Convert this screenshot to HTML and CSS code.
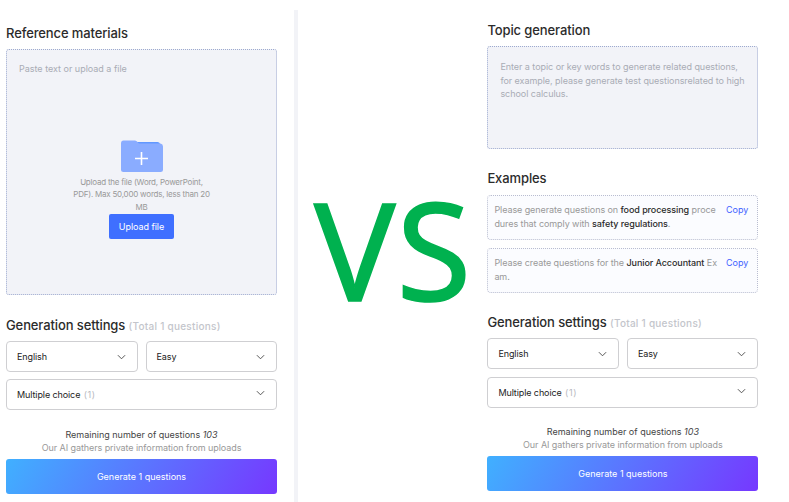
FILE: index.html
```html
<!DOCTYPE html>
<html lang="en">
<head>
  <meta charset="UTF-8">
  <meta name="viewport" content="width=device-width, initial-scale=1.0">
  <title>Question Generator</title>
  <link rel="stylesheet" href="styles.css">
</head>
<body>
  <div class="compare">
    <section class="panel panel-left">
      <h2>Reference materials</h2>
      <div class="upload-box">
        <p class="placeholder">Paste text or upload a file</p>
        <div class="upload">
          <svg class="folder" width="44" height="34" viewBox="0 0 44 34">
            <path d="M17 2h20.500q2 0 2.500 2v5H17z" fill="#6298ff"/>
            <path d="M1 3.500Q1 .5 3.500 .5H15q1.500 0 2.500 1.500T20 3.500h20.500Q43 4 43 6.500V29.500Q43 32 40.500 32H3.500Q1 32 1 29.500z" fill="#8aacff"/>
            <path d="M21.500 12v13M15 18.500h13" stroke="#fff" stroke-width="1.600" fill="none"/>
          </svg>
          <p class="upload-hint">Upload the file (Word, PowerPoint,<br>PDF). Max 50,000 words, less than 20<br>MB</p>
          <button class="upload-btn">Upload file</button>
        </div>
      </div>
      <h2 class="settings-title">Generation settings <small>(Total 1 questions)</small></h2>
      <div class="selects">
        <div class="select"><span>English</span><svg class="arrow" viewBox="0 0 10 6"><path d="M1 1l4 4 4-4"/></svg></div>
        <div class="select"><span>Easy</span><svg class="arrow" viewBox="0 0 10 6"><path d="M1 1l4 4 4-4"/></svg></div>
      </div>
      <div class="select select-wide"><span>Multiple choice <i class="count">(1)</i></span><svg class="arrow" viewBox="0 0 10 6"><path d="M1 1l4 4 4-4"/></svg></div>
      <div class="notes">
        <p class="remaining">Remaining number of questions <em>103</em></p>
        <p class="privacy">Our AI gathers private information from uploads</p>
      </div>
      <button class="generate">Generate 1 questions</button>
    </section>

    <div class="divider"></div>
    <div class="versus">VS</div>

    <section class="panel panel-right">
      <h2>Topic generation</h2>
      <div class="topic-box">
        <p class="placeholder">Enter a topic or key words to generate related questions,<br>for example, please generate test questionsrelated to high<br>school calculus.</p>
      </div>
      <h2 class="examples-title">Examples</h2>
      <div class="example">
        <p>Please generate questions on <b>food processing</b> proce<br>dures that comply with <b>safety regulations</b>.</p>
        <a class="copy">Copy</a>
      </div>
      <div class="example">
        <p>Please create questions for the <b>Junior Accountant</b> Ex<br>am.</p>
        <a class="copy">Copy</a>
      </div>
      <h2 class="settings-title">Generation settings <small>(Total 1 questions)</small></h2>
      <div class="selects">
        <div class="select"><span>English</span><svg class="arrow" viewBox="0 0 10 6"><path d="M1 1l4 4 4-4"/></svg></div>
        <div class="select"><span>Easy</span><svg class="arrow" viewBox="0 0 10 6"><path d="M1 1l4 4 4-4"/></svg></div>
      </div>
      <div class="select select-wide"><span>Multiple choice <i class="count">(1)</i></span><svg class="arrow" viewBox="0 0 10 6"><path d="M1 1l4 4 4-4"/></svg></div>
      <div class="notes">
        <p class="remaining">Remaining number of questions <em>103</em></p>
        <p class="privacy">Our AI gathers private information from uploads</p>
      </div>
      <button class="generate">Generate 1 questions</button>
    </section>
  </div>
</body>
</html>
```

FILE: styles.css
```css
* {
  box-sizing: border-box;
}

body {
  margin: 0;
  background: #fff;
  font-family: Inter, "Liberation Sans", sans-serif;
  font-size: 9px;
  color: #222;
  overflow: hidden;
}

h2, p {
  margin: 0;
  font-weight: 400;
}

button {
  border: 0;
  padding: 0;
  font-family: inherit;
  color: #fff;
}

.compare {
  display: flex;
  width: 789px;
  height: 502px;
}

.panel {
  width: 271px;
  flex: none;
}

.panel-left {
  margin-left: 6px;
  padding-top: 23px;
}

.panel-right {
  padding-top: 20px;
}

h2 {
  height: 20px;
  line-height: 20px;
  font-size: 13px;
  font-weight: 500;
  letter-spacing: -0.11px;
  color: #2b2b2b;
  white-space: nowrap;
}

h2 small {
  font-size: 10px;
  letter-spacing: 0.26px;
  color: #c3c5cb;
}

.divider {
  width: 4px;
  margin: 10px 0 0 17px;
  background: #f2f3f7;
}

.versus {
  width: 189.4px;
  padding: 156px 0 0 16px;
  font-family: "Noto Sans", sans-serif;
  font-size: 136px;
  line-height: 185px;
  letter-spacing: 1px;
  color: #00b14f;
  -webkit-text-stroke: 1.5px #00b14f;
  white-space: nowrap;
}

.upload-box {
  height: 246px;
  margin-top: 6px;
  padding: 12px;
  border: 1px dotted #9daacf;
  border-radius: 3px;
  background: #f2f3f8;
}

.placeholder {
  font-size: 9px;
  line-height: 13.6px;
  letter-spacing: -0.01px;
  color: #a9acb5;
  white-space: nowrap;
}

.upload {
  display: flex;
  flex-direction: column;
  align-items: center;
  margin-top: 64px;
}

.upload-hint {
  margin-top: 2px;
  font-size: 8px;
  line-height: 12.7px;
  letter-spacing: -0.22px;
  color: #999;
  text-align: center;
  white-space: nowrap;
}

.upload-btn {
  width: 65px;
  height: 25px;
  border-radius: 2px;
  background: #3f6fff;
  font-size: 9px;
  letter-spacing: -0.05px;
}

.settings-title {
  margin-top: 20px;
}

.selects {
  display: flex;
  gap: 8px;
  margin-top: 6px;
}

.select {
  display: flex;
  flex: 1;
  justify-content: space-between;
  align-items: center;
  height: 31px;
  padding: 0 11px 0 10px;
  border: 1px solid #cfcfd2;
  border-radius: 4px;
  font-size: 9px;
  letter-spacing: -0.1px;
}

.select-wide {
  margin-top: 7px;
}

.select-wide .arrow {
  margin-bottom: 4px;
}

.arrow {
  width: 9px;
  height: 6px;
  fill: none;
  stroke: #444;
  stroke-width: 1;
}

.count {
  margin-left: 1px;
  font-style: normal;
  letter-spacing: 0.6px;
  color: #b7b9c0;
}

.notes {
  margin-top: 18px;
  text-align: center;
  line-height: 13px;
}

.remaining {
  color: #444;
}

.privacy {
  letter-spacing: -0.07px;
  color: #999;
}

.generate {
  display: block;
  width: 271px;
  height: 35px;
  margin-top: 5px;
  border-radius: 3px;
  background: linear-gradient(120deg, #40b0ff, #7638ff);
  font-size: 9px;
}

.topic-box {
  height: 103px;
  margin-top: 6px;
  padding: 13px 12px;
  border: 1px dotted #9daacf;
  border-radius: 3px;
  background: #f2f3f8;
}

.topic-box .placeholder {
  letter-spacing: -0.05px;
}

.examples-title {
  margin-top: 19px;
}

.example {
  display: flex;
  justify-content: space-between;
  height: 45px;
  margin-top: 7px;
  padding: 7px 9px 0 6px;
  border: 1px dotted #b9bdd0;
  border-radius: 4px;
  background: #fbfcff;
  line-height: 14px;
  letter-spacing: -0.08px;
  color: #999;
  white-space: nowrap;
}

.example + .example {
  margin-top: 8px;
}

.example b {
  font-weight: 500;
  color: #2b2b2b;
}

.example .copy {
  letter-spacing: 0;
  color: #3f62ff;
}

.panel-right .settings-title {
  margin-top: 19px;
}

.panel-right .select-wide {
  margin-top: 8px;
}

.panel-right .notes {
  margin-top: 17px;
}
```
